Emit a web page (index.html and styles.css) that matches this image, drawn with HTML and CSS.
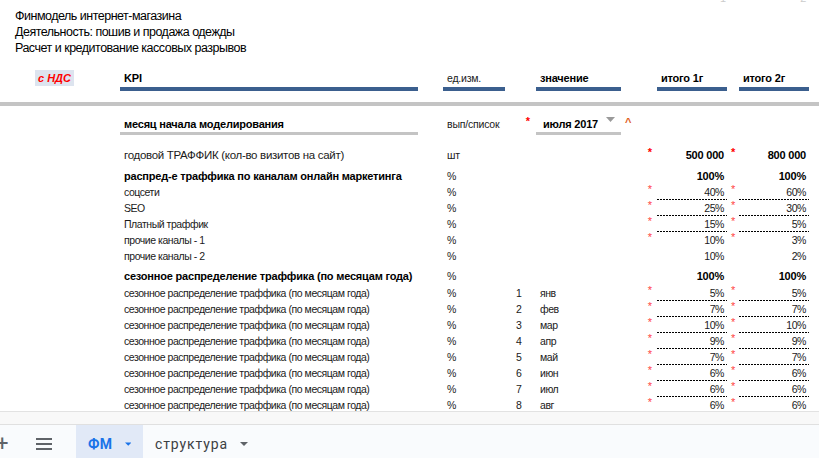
FILE: index.html
```html
<!DOCTYPE html>
<html lang="ru">
<head>
<meta charset="UTF-8">
<title>Финмодель интернет-магазина</title>
<link rel="stylesheet" href="styles.css">
</head>
<body>
<div class="app">
  <div class="sheet">
    <div class="groups"><span class="g1">1</span><span class="g2">2</span></div>

    <div class="titles">
      <div>Финмодель интернет-магазина</div>
      <div>Деятельность: пошив и продажа одежды</div>
      <div>Расчет и кредитование кассовых разрывов</div>
    </div>

    <div class="row head">
      <div class="c-nds"><span class="nds">с НДС</span></div>
      <div class="c-lab hb b">KPI</div>
      <div class="c-unit hb small">ед.изм.</div>
      <div class="c-val hb b">значение</div>
      <div class="t1 hb b left">итого 1г</div>
      <div class="t2 hb b left">итого 2г</div>
    </div>

    <div class="band"></div>

    <div class="row month">
      <div class="c-lab b gb">месяц начала моделирования</div>
      <div class="c-unit small">вып/список</div>
      <div class="c-num star red">*</div>
      <div class="c-val b gb pick">июля 2017<svg class="tri" width="9" height="5" viewBox="0 0 9 5"><path d="M0 0h9L4.5 5z" fill="#9a9a9a"/></svg></div>
      <div class="s1 caret">^</div>
    </div>

    <div class="row big">
      <div class="c-lab reg">годовой ТРАФФИК (кол-во визитов на сайт)</div>
      <div class="c-unit small">шт</div>
      <div class="s1 star red">*</div>
      <div class="t1 b">500 000</div>
      <div class="s2 star red">*</div>
      <div class="t2 b">800 000</div>
    </div>

    <div class="row sect">
      <div class="c-lab b">распред-е траффика по каналам онлайн маркетинга</div>
      <div class="c-unit small">%</div>
      <div class="t1 b">100%</div>
      <div class="t2 b">100%</div>
    </div>

    <div class="row sm">
      <div class="c-lab">соцсети</div><div class="c-unit">%</div>
      <div class="s1 star">*</div><div class="t1 dash">40%</div>
      <div class="s2 star">*</div><div class="t2 dash">60%</div>
    </div>
    <div class="row sm">
      <div class="c-lab">SEO</div><div class="c-unit">%</div>
      <div class="s1 star">*</div><div class="t1 dash">25%</div>
      <div class="s2 star">*</div><div class="t2 dash">30%</div>
    </div>
    <div class="row sm">
      <div class="c-lab">Платный траффик</div><div class="c-unit">%</div>
      <div class="s1 star">*</div><div class="t1 dash">15%</div>
      <div class="s2 star">*</div><div class="t2 dash">5%</div>
    </div>
    <div class="row sm">
      <div class="c-lab">прочие каналы - 1</div><div class="c-unit">%</div>
      <div class="s1 star">*</div><div class="t1">10%</div>
      <div class="s2 star">*</div><div class="t2">3%</div>
    </div>
    <div class="row sm">
      <div class="c-lab">прочие каналы - 2</div><div class="c-unit">%</div>
      <div class="t1">10%</div>
      <div class="t2">2%</div>
    </div>

    <div class="row sep">
      <div class="c-lab"></div><div class="t1"></div><div class="t2"></div>
    </div>

    <div class="row sect2">
      <div class="c-lab b">сезонное распределение траффика (по месяцам года)</div>
      <div class="c-unit small">%</div>
      <div class="t1 b">100%</div>
      <div class="t2 b">100%</div>
    </div>

    <div class="months">
      <div class="row sm">
        <div class="c-lab">сезонное распределение траффика (по месяцам года)</div><div class="c-unit">%</div>
        <div class="c-num">1</div><div class="c-val">янв</div>
        <div class="s1 star">*</div><div class="t1 dash">5%</div>
        <div class="s2 star">*</div><div class="t2 dash">5%</div>
      </div>
      <div class="row sm">
        <div class="c-lab">сезонное распределение траффика (по месяцам года)</div><div class="c-unit">%</div>
        <div class="c-num">2</div><div class="c-val">фев</div>
        <div class="s1 star">*</div><div class="t1 dash">7%</div>
        <div class="s2 star">*</div><div class="t2 dash">7%</div>
      </div>
      <div class="row sm">
        <div class="c-lab">сезонное распределение траффика (по месяцам года)</div><div class="c-unit">%</div>
        <div class="c-num">3</div><div class="c-val">мар</div>
        <div class="s1 star">*</div><div class="t1 dash">10%</div>
        <div class="s2 star">*</div><div class="t2 dash">10%</div>
      </div>
      <div class="row sm">
        <div class="c-lab">сезонное распределение траффика (по месяцам года)</div><div class="c-unit">%</div>
        <div class="c-num">4</div><div class="c-val">апр</div>
        <div class="s1 star">*</div><div class="t1 dash">9%</div>
        <div class="s2 star">*</div><div class="t2 dash">9%</div>
      </div>
      <div class="row sm">
        <div class="c-lab">сезонное распределение траффика (по месяцам года)</div><div class="c-unit">%</div>
        <div class="c-num">5</div><div class="c-val">май</div>
        <div class="s1 star">*</div><div class="t1 dash">7%</div>
        <div class="s2 star">*</div><div class="t2 dash">7%</div>
      </div>
      <div class="row sm">
        <div class="c-lab">сезонное распределение траффика (по месяцам года)</div><div class="c-unit">%</div>
        <div class="c-num">6</div><div class="c-val">июн</div>
        <div class="s1 star">*</div><div class="t1 dash">6%</div>
        <div class="s2 star">*</div><div class="t2 dash">6%</div>
      </div>
      <div class="row sm">
        <div class="c-lab">сезонное распределение траффика (по месяцам года)</div><div class="c-unit">%</div>
        <div class="c-num">7</div><div class="c-val">июл</div>
        <div class="s1 star">*</div><div class="t1 dash">6%</div>
        <div class="s2 star">*</div><div class="t2 dash">6%</div>
      </div>
      <div class="row sm">
        <div class="c-lab">сезонное распределение траффика (по месяцам года)</div><div class="c-unit">%</div>
        <div class="c-num">8</div><div class="c-val">авг</div>
        <div class="s1 star">*</div><div class="t1 dash">6%</div>
        <div class="s2 star">*</div><div class="t2 dash">6%</div>
      </div>
    </div>
  </div>

  <div class="hscroll"></div>

  <div class="tabs">
    <span class="plus">+</span>
    <span class="menu">
      <svg width="16" height="12" viewBox="0 0 16 12"><path d="M0 1h16M0 6h16M0 11h16" stroke="#5f6368" stroke-width="2"/></svg>
    </span>
    <div class="tab active">ФМ<svg class="arr" width="8" height="4" viewBox="0 0 8 4"><path d="M0 0h8L4 4z" fill="#1a73e8"/></svg></div>
    <div class="tab">структура<svg class="arr" width="8" height="4" viewBox="0 0 8 4"><path d="M0 0h8L4 4z" fill="#5f6368"/></svg></div>
  </div>
</div>
</body>
</html>
```

FILE: styles.css
```css
* { box-sizing: border-box; }
body { margin: 0; background: #fff; font-family: "Liberation Sans", Arial, sans-serif; color: #1a1a1a; }
.app { width: 819px; height: 458px; display: flex; flex-direction: column; overflow: hidden; }
.sheet { height: 411px; overflow: hidden; flex: none; }

.groups { height: 5px; overflow: hidden; display: flex; font-size: 11px; color: #ccc; }
.groups span { margin-top: -9px; line-height: 14px; }
.g1 { margin-left: 720px; }
.g2 { margin-left: 74px; }

.titles { padding: 3px 0 0 15px; font-size: 12.5px; line-height: 16px; color: #000; letter-spacing: -0.5px; }

.row { display: grid; grid-template-columns: 120px 298px 25px 62px 31px 85px 36px 70px 12px 70px 10px; height: 16px; line-height: 16px; font-size: 10.5px; letter-spacing: -0.45px; align-items: center; }
.row > div { white-space: nowrap; }
.c-nds { grid-column: 1; padding-left: 35px; }
.c-lab { grid-column: 2; padding-left: 4px; }
.c-unit { grid-column: 4; padding-left: 4px; }
.c-num { grid-column: 5; padding-left: 11px; }
.c-val { grid-column: 6; padding-left: 4px; }
.s1 { grid-column: 7; text-align: right; padding-right: 5px; }
.t1 { grid-column: 8; text-align: right; padding-right: 3px; }
.s2 { grid-column: 9; padding-left: 4px; }
.t2 { grid-column: 10; text-align: right; padding-right: 3px; }
.left { text-align: left; padding-left: 4px; }
.b { font-weight: bold; color: #000; font-size: 11px; letter-spacing: -0.2px; }
.reg { font-size: 11.5px; letter-spacing: -0.3px; }
.small { font-size: 10.5px; letter-spacing: -0.2px; }

.head { margin-top: 14px; height: 20px; align-items: stretch; }
.hb { border-bottom: 4px solid #3b5f8e; line-height: 17px; }
.nds { display: inline-block; background: #dde4ef; color: #f00; font-weight: bold; font-style: italic; font-size: 11px; padding: 0 3px; line-height: 16px; letter-spacing: 0; }

.band { height: 4px; background: #c4c4c4; margin-top: 12px; }

.month { margin-top: 10px; height: 19px; align-items: stretch; }
.gb { border-bottom: 3px solid #c4c4c4; }
.month .c-num { text-align: right; padding: 0 6px 0 0; }
.pick { padding-left: 7px; }
.tri { margin-left: 8px; vertical-align: 6px; }
.caret { text-align: left; padding-left: 4px; color: #e06020; font-weight: bold; font-size: 11px; line-height: 12px; align-self: start; }

.star { color: #f44; font-size: 11px; line-height: 11px; align-self: start; letter-spacing: 0; }
.red { color: #f00; font-weight: bold; }

.big { margin-top: 12px; height: 16px; }
.sect { margin-top: 5px; }
.dash { background: linear-gradient(to right, #000 2px, transparent 2px) left bottom / 3px 1px repeat-x; }

.sep { height: 4px; }
.sep > div { background: #d3d3d3; }
.sect2 { height: 16px; }
.months { margin-top: 1px; }

.hscroll { height: 14px; background: #f8f8f8; border-top: 1px solid #e2e2e2; border-bottom: 1px solid #e0e0e0; flex: none; }

.tabs { flex: 1; background: #f9fbfd; display: flex; align-items: stretch; font-family: Roboto, "Open Sans", sans-serif; font-size: 14px; color: #3c4043; }
.plus { width: 40px; margin-left: -4px; padding-top: 2px; font-size: 22px; line-height: 33px; color: #5f6368; }
.menu { width: 40px; display: flex; align-items: center; padding-top: 3px; }
.tab { display: flex; align-items: center; padding: 2px 12px 0; letter-spacing: 0.9px; }
.tab.active { background: #e1e9f7; color: #1a73e8; font-weight: bold; width: 67px; letter-spacing: 0.4px; }
.arr { margin-left: 12px; }
```
